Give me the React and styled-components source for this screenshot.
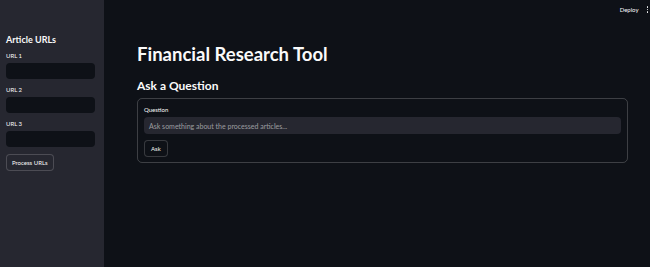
import React from 'react';
import styled, { createGlobalStyle } from 'styled-components';

const GlobalStyle = createGlobalStyle`
  html, body {
    margin: 0;
    padding: 0;
    background: #0e1117;
    font-family: Lato, "Noto Sans", sans-serif;
    color: #fafafa;
    -webkit-font-smoothing: antialiased;
  }
  * { box-sizing: border-box; }
`;

const Page = styled.div`
  display: flex;
  width: 650px;
  height: 267px;
  overflow: hidden;
`;

const Sidebar = styled.aside`
  width: 104px;
  flex-shrink: 0;
  background: #262730;
  padding: 34px 9px 0 6px;
  display: flex;
  flex-direction: column;
`;

const SideTitle = styled.h2`
  font-size: 9px;
  font-weight: 700;
  margin: 0 0 7px;
`;

const Field = styled.div`
  display: flex;
  flex-direction: column;
  margin-bottom: 7px;
`;

const Label = styled.label`
  font-size: 6px;
  font-weight: 400;
  color: #fafafa;
  margin-bottom: 4px;
`;

const SideInput = styled.div`
  height: 16px;
  border-radius: 4px;
  background: #0e1117;
`;

const Button = styled.button`
  align-self: flex-start;
  height: 17px;
  padding: 0 ${({ $pad }) => $pad}px;
  border-radius: 4px;
  border: 1px solid rgba(250, 250, 250, 0.18);
  background: ${({ $bg }) => $bg};
  color: #fafafa;
  font-family: inherit;
  font-size: 6px;
  line-height: 1;
  cursor: pointer;
`;

const Main = styled.main`
  flex: 1;
  display: flex;
  flex-direction: column;
`;

const Header = styled.header`
  height: 19px;
  display: flex;
  align-items: center;
  justify-content: flex-end;
  gap: 8px;
  padding-right: 2px;
  font-size: 6px;
  color: #fafafa;
`;

const Kebab = styled.div`
  display: flex;
  flex-direction: column;
  gap: 1px;
  span {
    width: 1.5px;
    height: 1.5px;
    border-radius: 50%;
    background: #fafafa;
  }
`;

const Content = styled.div`
  padding: 24px 22px 0 33px;
`;

const Title = styled.h1`
  font-size: 18.5px;
  font-weight: 700;
  margin: 0 0 13px;
`;

const Subtitle = styled.h3`
  font-size: 12px;
  font-weight: 700;
  margin: 0 0 5px;
`;

const Form = styled.div`
  border: 1px solid rgba(250, 250, 250, 0.2);
  border-radius: 5px;
  padding: 7px 6px 5px;
  display: flex;
  flex-direction: column;
`;

const QInput = styled.div`
  height: 17px;
  border-radius: 4px;
  background: #262730;
  display: flex;
  align-items: center;
  padding-left: 5px;
  font-size: 7px;
  color: rgba(250, 250, 250, 0.55);
  margin-bottom: 6px;
`;

export default function App() {
  return (
    <>
      <GlobalStyle />
      <Page>
        <Sidebar>
          <SideTitle>Article URLs</SideTitle>
          {[1, 2, 3].map((n) => (
            <Field key={n}>
              <Label>URL {n}</Label>
              <SideInput />
            </Field>
          ))}
          <Button $bg="#262730" $pad={5}>Process URLs</Button>
        </Sidebar>
        <Main>
          <Header>
            <span>Deploy</span>
            <Kebab><span /><span /><span /></Kebab>
          </Header>
          <Content>
            <Title>Financial Research Tool</Title>
            <Subtitle>Ask a Question</Subtitle>
            <Form>
              <Label>Question</Label>
              <QInput>Ask something about the processed articles...</QInput>
              <Button $bg="#0e1117" $pad={6}>Ask</Button>
            </Form>
          </Content>
        </Main>
      </Page>
    </>
  );
}
